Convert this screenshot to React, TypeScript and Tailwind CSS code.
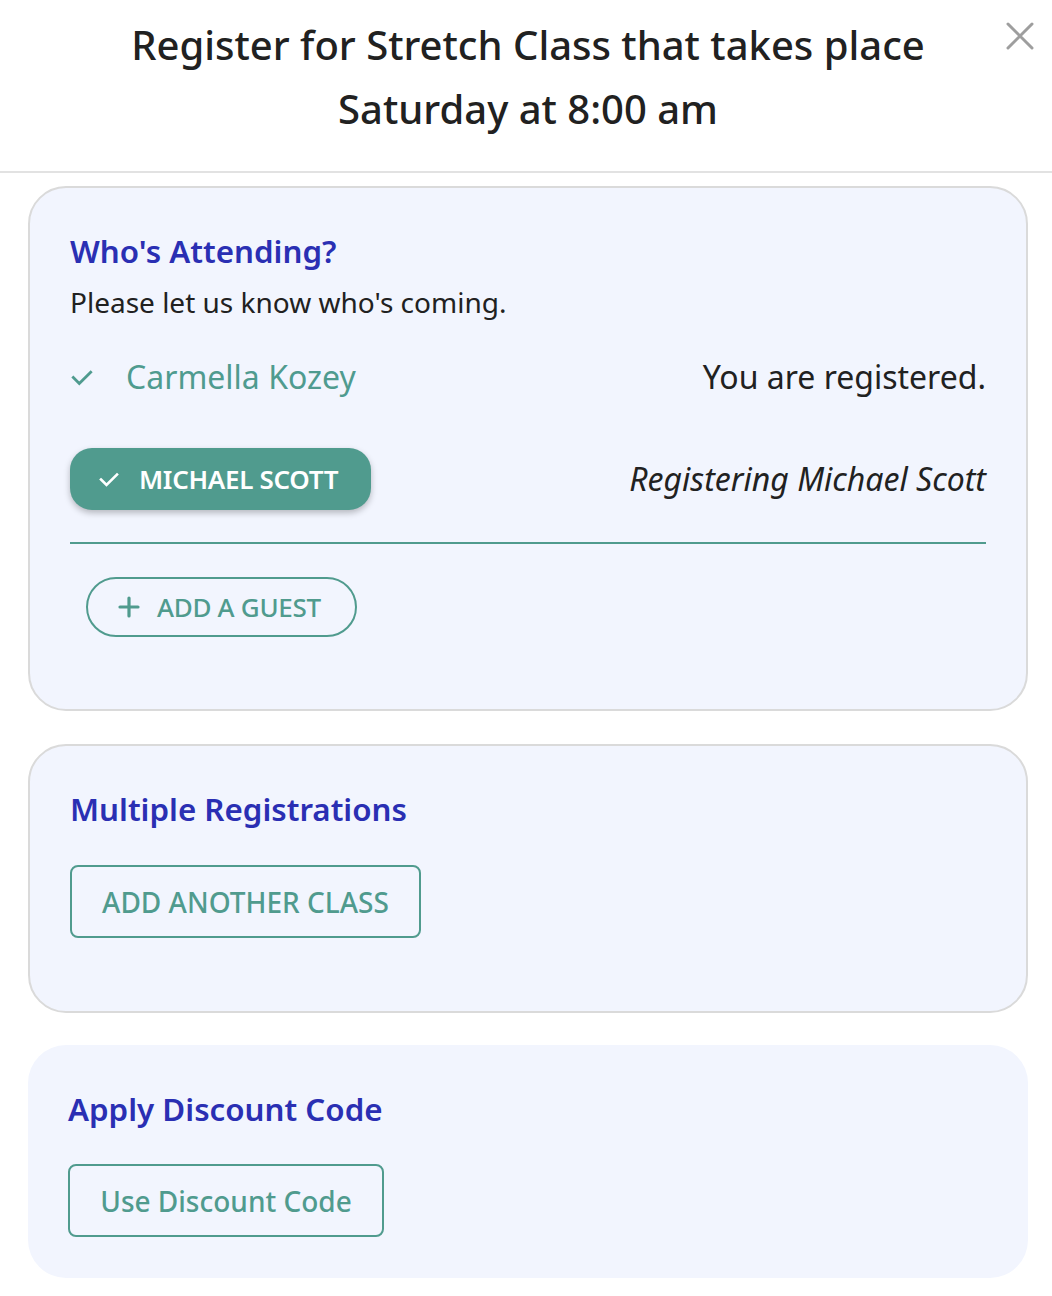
import React from "react";

const CheckIcon = ({ className }: { className?: string }) => (
  <svg viewBox="0 0 24 24" className={className} fill="none" stroke="currentColor" strokeWidth={2.6} strokeLinecap="square">
    <path d="M4 12.5 L9.5 18 L20 7.5" />
  </svg>
);

export default function App() {
  return (
    <div className="relative w-[1052px] min-h-[1296px] bg-white text-[#212121]" style={{ fontFamily: '"Noto Sans", "Open Sans", sans-serif' }}>
      <header className="border-b-2 border-[#e2e2e2] pt-[13px] pb-[30px] px-[90px]">
        <h1 className="text-center text-[40px] leading-[64px] font-medium text-[#212121] pl-[4px]">
          Register for Stretch Class that takes place
          <br />
          Saturday at 8:00 am
        </h1>
      </header>
      <button className="absolute left-[1005px] top-[21px] w-[30px] h-[30px] text-[#9e9e9e]" aria-label="close">
        <svg viewBox="0 0 30 30" className="w-[30px] h-[30px]" stroke="currentColor" strokeWidth={3} strokeLinecap="round">
          <path d="M3 3 L27 27 M27 3 L3 27" />
        </svg>
      </button>

      <main className="pl-[28px] pr-[24px] pt-[13px] flex flex-col">
        <section className="rounded-[38px] border-2 border-[#dadada] bg-[#f2f5fe] px-[40px] pt-[43px] pb-[72px]">
          <h2 className="text-[31.3px] leading-[40px] font-semibold text-[#2a2fb3]">Who's Attending?</h2>
          <p className="mt-[13px] text-[28px] leading-[36px]">Please let us know who's coming.</p>
          <div className="mt-[35px] flex items-center justify-between h-[44px]">
            <div className="flex items-center text-[#4f9b8f]">
              <CheckIcon className="w-[26px] h-[26px] -ml-[1px]" />
              <span className="ml-[31px] text-[32px] leading-[44px]">Carmella Kozey</span>
            </div>
            <span className="text-[32px] leading-[44px]">You are registered.</span>
          </div>
          <div className="mt-[49px] flex items-center justify-between">
            <button className="h-[62px] w-[301px] rounded-[22px] bg-[#509b8e] text-white flex items-center pl-[27px] shadow-[0_3px_6px_rgba(0,0,0,0.25)]">
              <CheckIcon className="w-[24px] h-[24px]" />
              <span className="ml-[18px] text-[26px] font-semibold leading-[36px] tracking-[-0.3px]">MICHAEL SCOTT</span>
            </button>
            <span className="text-[32px] leading-[44px] italic">Registering Michael Scott</span>
          </div>
          <div className="mt-[32px] h-[2px] bg-[#509b8e]" />
          <button className="mt-[33px] ml-[16px] h-[60px] w-[271px] rounded-[30px] border-2 border-[#509b8e] text-[#509b8e] flex items-center pl-[29px]">
            <svg viewBox="0 0 24 24" className="w-[24px] h-[24px]" stroke="currentColor" strokeWidth={3.2} strokeLinecap="round">
              <path d="M12 3 V21 M3 12 H21" />
            </svg>
            <span className="ml-[16px] text-[26px] font-medium leading-[36px] tracking-[-0.3px]">ADD A GUEST</span>
          </button>
        </section>

        <section className="mt-[33px] rounded-[38px] border-2 border-[#dadada] bg-[#f2f5fe] px-[40px] pt-[43px] pb-[73px]">
          <h2 className="text-[31.3px] leading-[40px] font-semibold text-[#2a2fb3]">Multiple Registrations</h2>
          <button className="mt-[36px] h-[73px] w-[351px] rounded-[8px] border-2 border-[#509b8e] text-[#509b8e] flex items-center justify-center">
            <span className="text-[28px] font-medium leading-[36px]">ADD ANOTHER CLASS</span>
          </button>
        </section>

        <section className="mt-[32px] rounded-[38px] bg-[#f2f5fe] px-[40px] pt-[44px] pb-[41px]">
          <h2 className="text-[31.3px] leading-[40px] font-semibold text-[#2a2fb3]">Apply Discount Code</h2>
          <button className="mt-[35px] h-[73px] w-[316px] rounded-[8px] border-2 border-[#509b8e] text-[#509b8e] flex items-center justify-center">
            <span className="text-[28px] font-medium leading-[36px]">Use Discount Code</span>
          </button>
        </section>
      </main>
    </div>
  );
}
